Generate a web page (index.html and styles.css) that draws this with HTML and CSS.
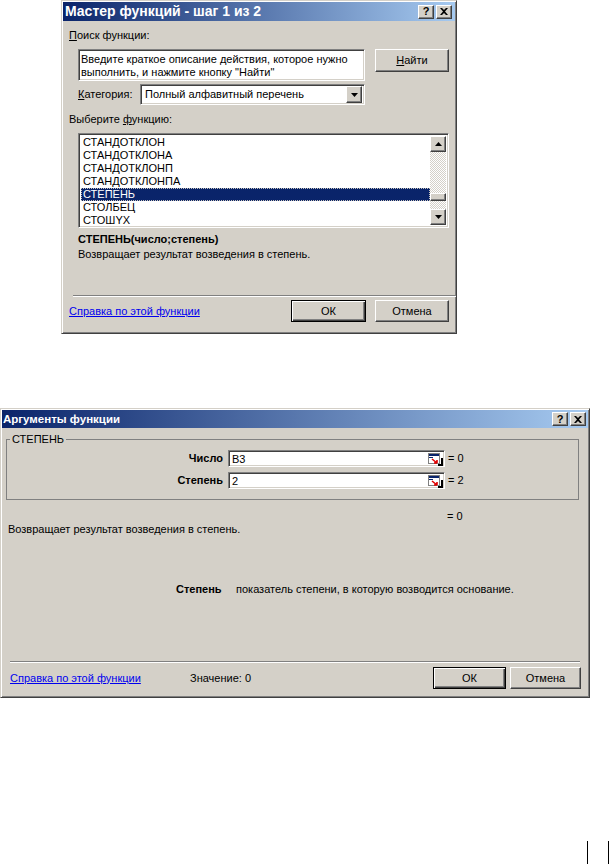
FILE: index.html
```html
<!DOCTYPE html>
<html lang="ru">

<head>
    <meta charset="UTF-8">
    <meta name="viewport" content="width=device-width, initial-scale=1.0">
    <title>Мастер функций</title>
    <link rel="stylesheet" href="styles.css">
</head>

<body>
    <div class="page">
        <!-- шаг 1: выбор функции -->
        <div class="dlg wizard">
            <div class="titlebar">
                <span class="title">Мастер функций - шаг 1 из 2</span>
                <div class="caption-btns">
                    <span class="cbtn">?</span>
                    <span class="cbtn"><svg width="8" height="7" viewBox="0 0 8 7"><path d="M0 0h2l2 2 2-2h2L5 3.5 8 7H6L4 5 2 7H0l3-3.5z" fill="#000"/></svg></span>
                </div>
            </div>
            <div class="wiz-body">
                <div class="lbl search-lbl"><u>П</u>оиск функции:</div>
                <div class="search-row">
                    <div class="field search-box">Введите краткое описание действия, которое нужно<br>выполнить, и нажмите кнопку "Найти"</div>
                    <span class="btn find-btn"><u>Н</u>айти</span>
                </div>
                <div class="cat-row">
                    <span class="cat-lbl"><u>К</u>атегория:</span>
                    <div class="field combo">
                        <span class="combo-text">Полный алфавитный перечень</span>
                        <span class="btn drop-btn"><svg width="7" height="4" viewBox="0 0 7 4"><path d="M0 0h7L3.5 4z" fill="#000"/></svg></span>
                    </div>
                </div>
                <div class="lbl fn-lbl">Выберите <u>ф</u>ункцию:</div>
                <div class="field listbox">
                    <ul class="fn-list">
                        <li>СТАНДОТКЛОН</li>
                        <li>СТАНДОТКЛОНА</li>
                        <li>СТАНДОТКЛОНП</li>
                        <li>СТАНДОТКЛОНПА</li>
                        <li class="sel">СТЕПЕНЬ</li>
                        <li>СТОЛБЕЦ</li>
                        <li>СТОШYX</li>
                    </ul>
                    <div class="vscroll">
                        <span class="btn sb-btn"><svg width="7" height="4" viewBox="0 0 7 4"><path d="M3.5 0L7 4H0z" fill="#000"/></svg></span>
                        <span class="track track-top"></span>
                        <span class="btn thumb"></span>
                        <span class="track track-bottom"></span>
                        <span class="btn sb-btn"><svg width="7" height="4" viewBox="0 0 7 4"><path d="M0 0h7L3.5 4z" fill="#000"/></svg></span>
                    </div>
                </div>
                <div class="sig">СТЕПЕНЬ(число;степень)</div>
                <div class="desc">Возвращает результат возведения в степень.</div>
                <div class="sep"></div>
                <div class="footer">
                    <a class="help-link" href="#">Справка по этой функции</a>
                    <div class="btns">
                        <span class="btn default ok">ОК</span>
                        <span class="btn cancel">Отмена</span>
                    </div>
                </div>
            </div>
        </div>

        <!-- шаг 2: аргументы -->
        <div class="dlg args">
            <div class="titlebar">
                <span class="title">Аргументы функции</span>
                <div class="caption-btns">
                    <span class="cbtn">?</span>
                    <span class="cbtn"><svg width="8" height="7" viewBox="0 0 8 7"><path d="M0 0h2l2 2 2-2h2L5 3.5 8 7H6L4 5 2 7H0l3-3.5z" fill="#000"/></svg></span>
                </div>
            </div>
            <div class="args-body">
                <fieldset class="group">
                    <legend>СТЕПЕНЬ</legend>
                    <div class="arg-grid">
                        <span class="arg-name">Число</span>
                        <div class="field arg-input">
                            <span>B3</span>
                            <svg class="ref-icon" width="15" height="13" viewBox="0 0 15 13"><rect x="0.5" y="0.5" width="11" height="10" fill="#fff" stroke="#808080"/><rect x="1" y="1" width="10" height="2" fill="#0a246a"/><rect x="1" y="4" width="4" height="1" fill="#0a246a"/><path d="M4 6l5 4M9 10V7M9 10H6" stroke="#e00000" stroke-width="1.6" fill="none"/><rect x="10" y="11" width="5" height="2" fill="#000"/><rect x="13" y="5" width="2" height="6" fill="#000"/></svg>
                        </div>
                        <span class="arg-val">= 0</span>
                        <span class="arg-name">Степень</span>
                        <div class="field arg-input">
                            <span>2</span>
                            <svg class="ref-icon" width="15" height="13" viewBox="0 0 15 13"><rect x="0.5" y="0.5" width="11" height="10" fill="#fff" stroke="#808080"/><rect x="1" y="1" width="10" height="2" fill="#0a246a"/><rect x="1" y="4" width="4" height="1" fill="#0a246a"/><path d="M4 6l5 4M9 10V7M9 10H6" stroke="#e00000" stroke-width="1.6" fill="none"/><rect x="10" y="11" width="5" height="2" fill="#000"/><rect x="13" y="5" width="2" height="6" fill="#000"/></svg>
                        </div>
                        <span class="arg-val">= 2</span>
                    </div>
                </fieldset>
                <div class="result">= 0</div>
                <div class="desc2">Возвращает результат возведения в степень.</div>
                <div class="arg-help">
                    <b>Степень</b>
                    <span>показатель степени, в которую возводится основание.</span>
                </div>
                <div class="sep sep2"></div>
                <div class="footer footer2">
                    <a class="help-link" href="#">Справка по этой функции</a>
                    <span class="value">Значение:&nbsp;0</span>
                    <div class="btns">
                        <span class="btn default ok2">ОК</span>
                        <span class="btn cancel2">Отмена</span>
                    </div>
                </div>
            </div>
        </div>

        <!-- метки на краю страницы -->
        <div class="marks"></div>
    </div>
</body>

</html>
```

FILE: styles.css
```css
* {
    box-sizing: border-box;
}

body {
    margin: 0;
    background: #fff;
    color: #000;
    font: 11px/13px "Liberation Sans", Arial, sans-serif;
    overflow: hidden;
}

.page {
    display: flex;
    flex-direction: column;
    align-items: flex-start;
}

/* окно в стиле Windows Classic */
.dlg {
    display: flex;
    flex-direction: column;
    padding: 1px;
    background: #d4d0c8;
    border: 1px solid;
    border-color: #d4d0c8 #404040 #404040 #d4d0c8;
    box-shadow: inset 1px 1px #fff, inset -1px -1px #808080;
}

.wizard {
    width: 396px;
    height: 334px;
    margin-left: 61px;
}

.args {
    width: 590px;
    height: 290px;
    margin-top: 74px;
}

.titlebar {
    display: flex;
    align-items: center;
    justify-content: space-between;
    flex: none;
    height: 19px;
    padding: 0 3px 0 2px;
    background: linear-gradient(to right, #0a246a, #a6caf0);
}

.args .titlebar {
    height: 18px;
    padding: 0 2px 0 1px;
}

.title {
    color: #fff;
    font-weight: bold;
}

.wizard .title {
    font-size: 14px;
}

.args .title {
    font-size: 11.5px;
}

.caption-btns {
    display: flex;
    gap: 2px;
}

.cbtn {
    display: flex;
    align-items: center;
    justify-content: center;
    width: 16px;
    height: 14px;
    background: #d4d0c8;
    border: 1px solid;
    border-color: #fff #404040 #404040 #fff;
    box-shadow: inset -1px -1px #808080;
    font-weight: bold;
    font-size: 11px;
}

/* поле ввода, утопленное */
.field {
    background: #fff;
    border: 1px solid;
    border-color: #808080 #fff #fff #808080;
    box-shadow: inset 1px 1px #404040, inset -1px -1px #d4d0c8;
}

.btn {
    display: flex;
    align-items: center;
    justify-content: center;
    flex: none;
    background: #d4d0c8;
    border: 1px solid;
    border-color: #fff #404040 #404040 #fff;
    box-shadow: inset -1px -1px #808080;
}

.btn.default {
    border-color: #000;
    box-shadow: inset 1px 1px #fff, inset -1px -1px #404040, inset -2px -2px #808080;
}

/* шаг 1 */
.wiz-body {
    display: flex;
    flex-direction: column;
    padding: 0 6px;
}

.search-lbl {
    margin-top: 8px;
}

.search-row {
    display: flex;
    margin-top: 7px;
}

.search-box {
    width: 287px;
    height: 32px;
    margin-left: 9px;
    padding: 3px 2px;
}

.find-btn {
    width: 74px;
    height: 23px;
    margin-left: 10px;
}

.cat-row {
    display: flex;
    align-items: center;
    margin-top: 3px;
}

.cat-lbl {
    width: 62px;
    margin-left: 9px;
}

.combo {
    display: flex;
    align-items: center;
    width: 225px;
    height: 21px;
    padding: 2px;
}

.combo-text {
    flex: 1;
    padding-left: 2px;
}

.drop-btn {
    width: 16px;
    height: 17px;
}

.fn-lbl {
    margin-top: 8px;
}

.listbox {
    display: flex;
    width: 371px;
    height: 95px;
    margin: 7px 0 0 9px;
    padding: 2px;
}

.fn-list {
    flex: 1;
    margin: 0;
    padding: 0;
}

.fn-list li {
    list-style: none;
    height: 13px;
    padding-left: 2px;
}

.fn-list .sel {
    background: #0a246a;
    color: #fff;
    outline: 1px dotted #c8c4bc;
    outline-offset: -1px;
}

.vscroll {
    display: flex;
    flex-direction: column;
    width: 16px;
}

.sb-btn {
    height: 16px;
}

.track {
    background: repeating-conic-gradient(#fff 0 25%, #d4d0c8 0 50%) 0 0 / 2px 2px;
}

.track-top {
    height: 43px;
}

.track-bottom {
    height: 8px;
}

.thumb {
    height: 8px;
}

.sig {
    margin: 5px 0 0 9px;
    font-weight: bold;
}

.desc {
    margin: 2px 0 0 9px;
}

.sep {
    width: 383px;
    height: 2px;
    margin: 34px 0 0 4px;
    border-top: 1px solid #808080;
    border-bottom: 1px solid #fff;
}

.footer {
    display: flex;
    align-items: center;
    justify-content: space-between;
    margin-top: 3px;
}

.help-link {
    margin-left: 0;
    color: #0000ee;
}

.btns {
    display: flex;
}

.ok {
    width: 75px;
    height: 22px;
}

.cancel {
    width: 74px;
    height: 22px;
    margin-left: 9px;
}

/* шаг 2 */
.args-body {
    display: flex;
    flex-direction: column;
}

.group {
    width: 573px;
    margin: 5px 0 0 4px;
    padding: 4px 0 10px 0;
    border: 1px solid #808080;
}

.group legend {
    margin-left: 3px;
    padding: 0 2px;
}

.arg-grid {
    display: grid;
    grid-template-columns: 221px 217px auto;
    row-gap: 5px;
    align-items: center;
}

.arg-name {
    padding-right: 5px;
    text-align: right;
    font-weight: bold;
}

.arg-input {
    display: flex;
    align-items: center;
    justify-content: space-between;
    height: 17px;
    padding: 2px 1px 1px 3px;
}

.arg-val {
    padding-left: 3px;
}

.result {
    margin: 10px 0 0 445px;
}

.desc2 {
    margin-left: 6px;
}

.arg-help {
    display: flex;
    margin: 47px 0 0 174px;
}

.arg-help b {
    width: 60px;
}

.sep2 {
    width: 570px;
    margin: 65px 0 0 8px;
}

.footer2 {
    justify-content: flex-start;
    margin-top: 4px;
    padding-right: 7px;
}

.footer2 .help-link {
    width: 180px;
    margin-left: 8px;
}

.footer2 .btns {
    margin-left: auto;
}

.ok2 {
    width: 73px;
    height: 22px;
}

.cancel2 {
    width: 71px;
    height: 22px;
    margin-left: 4px;
}

.marks {
    width: 22px;
    height: 23px;
    margin: 143px 0 0 587px;
    border-left: 1px solid #000;
    border-right: 1px solid #000;
}
```
